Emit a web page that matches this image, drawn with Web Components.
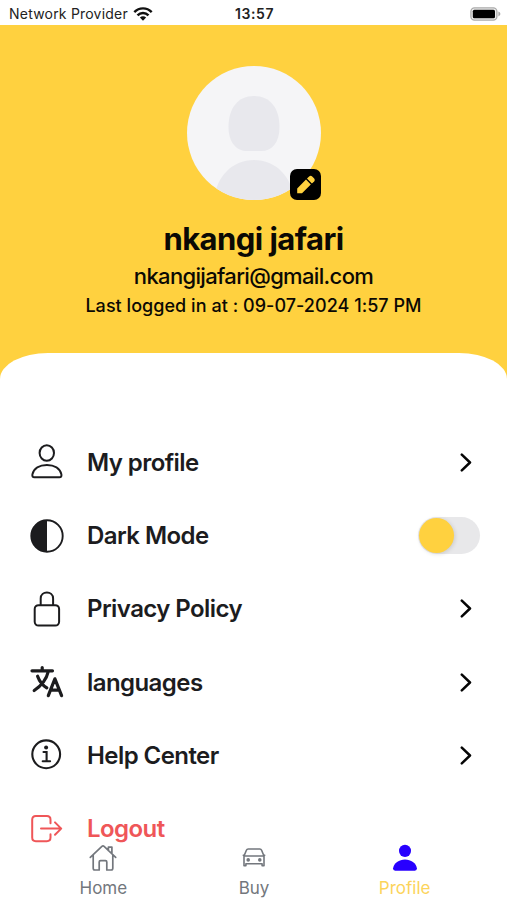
<!DOCTYPE html>
<html lang="en">
<head>
<meta charset="utf-8">
<title>Profile</title>
<style>
html,body{margin:0;height:900px;overflow:hidden;background:#fff}
body{font-family:Inter,"Liberation Sans",sans-serif;color:#1c1c1e}
</style>
</head>
<body>
<profile-screen></profile-screen>
<script>
const define = (name, html) => {
  const template = document.createElement('template');
  template.innerHTML = html;
  customElements.define(name, class extends HTMLElement {
    constructor() {
      super();
      this.attachShadow({mode: 'open'}).append(template.content.cloneNode(true));
    }
  });
};

define('status-bar', `
<style>
:host{display:grid;grid-template-columns:1fr auto 1fr;align-items:center;height:25px;box-sizing:border-box;padding:2px 7px 0 9px;background:#fff;color:#222}
.left{display:flex;align-items:center;gap:5px}
.net{font-size:14px;letter-spacing:.21px;white-space:nowrap}
.time{font-size:14px;font-weight:600;letter-spacing:.6px}
.bat{justify-self:end;margin-right:-1px}
svg{display:block}
</style>
<div class="left"><span class="net">Network Provider</span>
<svg width="20" height="14" viewBox="0 0 20 14" fill="none" stroke="#111" stroke-width="2.4"><path d="M1.3 5.2C6.3.1 13.7.1 18.7 5.2"/><path d="M4.5 8.4c3.1-3.2 7.900-3.2 11 0"/><path d="M6.9 10.6c1.8-1.8 4.4-1.8 6.2 0L10 13.8z" fill="#111" stroke="none"/></svg></div>
<span class="time">13:57</span>
<svg class="bat" width="31" height="14" viewBox="0 0 31 14"><rect x=".9" y=".9" width="26" height="12.2" rx="3.6" fill="#eee" stroke="#aaa" stroke-width="1.3"/><rect x="2.8" y="2.7" width="22.2" height="8.6" rx="1.5" fill="#000"/><path d="M28.4 4.6c2.6 1.2 2.6 3.6 0 4.8z" fill="#aaa"/></svg>`);

define('user-avatar', `
<style>
:host{display:block;position:relative;width:134px;height:134px}
svg{display:block}
.edit{position:absolute;right:0;bottom:0}
</style>
<svg width="134" height="134" viewBox="0 0 134 134"><defs><clipPath id="c"><circle cx="67" cy="67" r="67"/></clipPath></defs><circle cx="67" cy="67" r="67" fill="#f5f5f7"/><g clip-path="url(#c)" fill="#e8e8ed"><path d="M67 30c16 0 25.500 12 25.500 31 0 16-8 24-18 24H60c-10 0-18.500-8-18.500-24 0-19 9.500-31 25.500-31z"/><path d="M27 134c2-23 18-40 40-40s38 17 40 40z"/></g></svg>
<svg class="edit" width="31" height="31" viewBox="0 0 31 31"><rect width="31" height="31" rx="7" fill="#000"/><path d="M7.200 24.200v-4.800L16 10.600l4.800 4.800-8.800 8.800zM17 9.600l2.100-2.200q1.600-1.300 3.100 0l2 2q1.300 1.500 0 3.100l-2.300 2z" fill="#ffd13f"/></svg>`);

define('profile-header', `
<style>
:host{display:flex;flex-direction:column;align-items:center;height:327.500px;box-sizing:border-box;padding-top:41px;color:#0b0904;white-space:nowrap}
.name{margin-top:20px;font-size:31px;line-height:38px;font-weight:700;letter-spacing:-.55px}
.mail{margin-top:4px;font-size:22px;line-height:28px;font-weight:500;letter-spacing:-.66px}
.last{margin-top:5px;font-size:18px;line-height:22px;font-weight:500;letter-spacing:.04px}
</style>
<user-avatar></user-avatar>
<div class="name"><slot name="name"></slot></div>
<div class="mail"><slot name="mail"></slot></div>
<div class="last"><slot name="last"></slot></div>`);

define('menu-row', `
<style>
:host{display:grid;grid-template-columns:34px 1fr auto;column-gap:23px;align-items:center;height:73.25px;box-sizing:border-box;padding:0 27px 0 30px;font-size:24px;font-weight:600;letter-spacing:-.57px;white-space:nowrap}
::slotted(svg){display:block}
</style>
<slot name="icon"></slot><span><slot></slot></span><slot name="end"></slot>`);

define('row-chevron', `
<style>:host{display:block;margin-right:8px}svg{display:block}</style>
<svg width="12" height="19" viewBox="0 0 12 19" fill="none" stroke="#050505" stroke-width="2.500" stroke-linecap="round" stroke-linejoin="round"><path d="m1.800 1.700 8.200 7.800-8.200 7.800"/></svg>`);

define('toggle-switch', `
<style>
:host{display:flex;align-items:center;width:62px;height:37px;box-sizing:border-box;padding:1px;border-radius:19px;background:#e8e8ea}
i{width:35px;height:35px;border-radius:50%;background:#ffd13f;box-shadow:1px 1px 4px #0002}
</style><i></i>`);

define('tab-item', `
<style>
:host{display:flex;flex-direction:column;align-items:center;gap:5px;font-size:17px;line-height:23px;color:#73777d}
::slotted(svg){display:block}
</style>
<slot name="icon"></slot><span><slot></slot></span>`);

define('tab-bar', `
<style>
:host{position:absolute;left:0;right:0;bottom:0;height:56px;box-sizing:border-box;padding:0 27px 0 28px;display:grid;grid-template-columns:repeat(3,1fr)}
</style><slot></slot>`);

define('profile-screen', `
<style>
:host{display:flex;flex-direction:column;position:relative;width:507px;height:900px;overflow:hidden;background:linear-gradient(#ffd13f 0 420px,#fff 420px)}
.sheet{flex:1;background:#fff;border-radius:48px 48px 0 0 / 26px 26px 0 0;padding-top:73.300px}
.danger{color:#ef5658}
.active{color:#fcd45b}
</style>
<status-bar></status-bar>
<profile-header><span slot="name">nkangi jafari</span><span slot="mail">nkangijafari@gmail.com</span><span slot="last">Last logged in at : 09-07-2024 1:57 PM</span></profile-header>
<div class="sheet">
<menu-row><svg slot="icon" width="34" height="36" viewBox="0 0 34 36" fill="none" stroke="#1c1c1e" stroke-width="2"><ellipse cx="16.800" cy="9" rx="7.200" ry="7.700"/><path d="M4.400 33.300q-2.400 0-2-2.900C3.800 24.300 9.500 20.900 16.900 20.900s13.100 3.400 14.500 9.500q.4 2.900-2 2.900z"/></svg>My profile<row-chevron slot="end"></row-chevron></menu-row>
<menu-row><svg slot="icon" width="34" height="34" viewBox="0 0 34 34"><circle cx="17" cy="17" r="15.700" fill="#fff" stroke="#1c1c1e" stroke-width="1.900"/><path d="M17 1.300a15.700 15.700 0 0 0 0 31.400z" fill="#1c1c1e"/></svg>Dark Mode<toggle-switch slot="end"></toggle-switch></menu-row>
<menu-row><svg slot="icon" width="34" height="36" viewBox="0 0 34 36" fill="none" stroke="#1c1c1e" stroke-width="2"><rect x="4.700" y="14.200" width="24.400" height="20.400" rx="3.800"/><path d="M10.700 14.200V7.500c0-8 12.400-8 12.400 0v6.700"/></svg>Privacy Policy<row-chevron slot="end"></row-chevron></menu-row>
<menu-row><svg slot="icon" width="34" height="34" viewBox="0 0 34 34" fill="none" stroke="#1c1c1e" stroke-width="3.200" stroke-linecap="round" stroke-linejoin="round"><path d="M2 5.800h20.500M12.200 2.500v3.200M18.300 6.500C16.500 14 11 21 4.200 25.500M7.600 11.200c1.800 5 5 9 9.200 11.700M18.300 30.700l6.600-16.900 6.700 16.900M20.600 25.200h8.600"/></svg>languages<row-chevron slot="end"></row-chevron></menu-row>
<menu-row><svg slot="icon" width="34" height="34" viewBox="0 0 34 34" fill="none" stroke="#1c1c1e" stroke-width="2.100" stroke-linecap="round"><circle cx="16.200" cy="16.300" r="13.900"/><path d="M13.500 14h3.100v9M12.700 23.300h7.400"/><circle cx="16.100" cy="9.600" r="2" fill="#1c1c1e" stroke="none"/></svg>Help Center<row-chevron slot="end"></row-chevron></menu-row>
<menu-row class="danger"><svg slot="icon" width="34" height="34" viewBox="0 0 34 34" fill="none" stroke="#ef5658" stroke-width="2" stroke-linecap="round" stroke-linejoin="round"><path d="M20.500 11.300V7.700q0-3.600-3.600-3.600H5.800Q2.200 4.100 2.200 7.700v17.900q0 3.600 3.600 3.600h11.100q3.600 0 3.600-3.600v-3.300M11 16.600h20.200M25 10.400l6.200 6.200-6.200 6.200"/></svg>Logout</menu-row>
</div>
<tab-bar>
<tab-item><svg slot="icon" width="28" height="28" viewBox="0 0 28 28" fill="none" stroke="#73777d" stroke-width="1.700" stroke-linecap="round" stroke-linejoin="round"><path d="M1.300 13.400 12.900 2.400q1.100-1 2.200 0L26.700 13.400M4.200 11.100v13.200q0 1.700 1.700 1.700h4.300v-8q0-1.300 1.300-1.300h5q1.300 0 1.300 1.300v8h4.300q1.700 0 1.700-1.700V11.100M19.400 6.400V3.100h3.500v6.600"/></svg>Home</tab-item>
<tab-item><svg slot="icon" width="28" height="28" viewBox="0 0 28 28" fill="none" stroke="#73777d" stroke-width="1.600" stroke-linecap="round" stroke-linejoin="round"><path d="m4 12 2.400-5.800q.5-1.200 1.800-1.200h11.600q1.300 0 1.800 1.200L24 12M4 12h20v9.700h-1.900v-1.900H5.900v1.900H4z"/><path d="M3.300 11.200h1M23.700 11.200h1"/><circle cx="8.200" cy="15.900" r="1" fill="#73777d"/><circle cx="19.800" cy="15.900" r="1" fill="#73777d"/></svg>Buy</tab-item>
<tab-item class="active"><svg slot="icon" width="28" height="28" viewBox="0 0 28 28" fill="#2800ff"><ellipse cx="14" cy="6.900" rx="6" ry="6.200"/><path d="M4.200 26.700q-2.300 0-2.100-2.400c.6-5.300 6-8.900 11.900-8.900s11.300 3.600 11.900 8.900q.2 2.400-2.100 2.400z"/></svg>Profile</tab-item>
</tab-bar>`);
</script>
</body>
</html>
